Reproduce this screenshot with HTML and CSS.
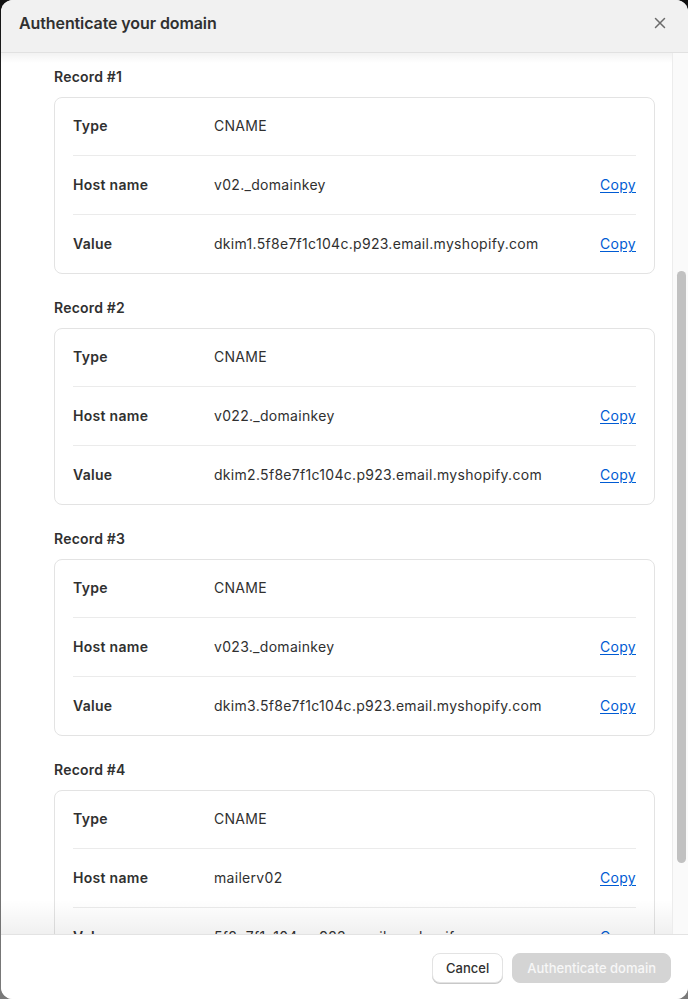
FILE: index.html
```html
<!DOCTYPE html>
<html>
<head>
<meta charset="UTF-8" /><title>Authenticate your domain</title>
<link rel="stylesheet" href="styles.css">
</head>
<body>
<div class="modal">
	<div class="modal-head">
		<h2 class="modal-title">Authenticate your domain</h2>
		<span class="close">
			<svg width="12" height="12" viewBox="0 0 12 12"><path d="M1.5 1.5l9 9M10.5 1.5l-9 9" stroke="#6b6b6b" stroke-width="1.5" stroke-linecap="round" fill="none"/></svg>
		</span>
	</div>

	<div class="modal-body">
		<div class="records">
			<div class="record">
				<h3 class="record-title">Record #1</h3>
				<div class="card">
					<div class="row"><span class="label">Type</span><span class="value">CNAME</span></div>
					<div class="row"><span class="label">Host name</span><span class="value">v02._domainkey</span><a class="copy" href="#">Copy</a></div>
					<div class="row"><span class="label">Value</span><span class="value">dkim1.5f8e7f1c104c.p923.email.myshopify.com</span><a class="copy" href="#">Copy</a></div>
				</div>
			</div>
			<div class="record">
				<h3 class="record-title">Record #2</h3>
				<div class="card">
					<div class="row"><span class="label">Type</span><span class="value">CNAME</span></div>
					<div class="row"><span class="label">Host name</span><span class="value">v022._domainkey</span><a class="copy" href="#">Copy</a></div>
					<div class="row"><span class="label">Value</span><span class="value">dkim2.5f8e7f1c104c.p923.email.myshopify.com</span><a class="copy" href="#">Copy</a></div>
				</div>
			</div>
			<div class="record">
				<h3 class="record-title">Record #3</h3>
				<div class="card">
					<div class="row"><span class="label">Type</span><span class="value">CNAME</span></div>
					<div class="row"><span class="label">Host name</span><span class="value">v023._domainkey</span><a class="copy" href="#">Copy</a></div>
					<div class="row"><span class="label">Value</span><span class="value">dkim3.5f8e7f1c104c.p923.email.myshopify.com</span><a class="copy" href="#">Copy</a></div>
				</div>
			</div>
			<div class="record">
				<h3 class="record-title">Record #4</h3>
				<div class="card">
					<div class="row"><span class="label">Type</span><span class="value">CNAME</span></div>
					<div class="row"><span class="label">Host name</span><span class="value">mailerv02</span><a class="copy" href="#">Copy</a></div>
					<div class="row"><span class="label">Value</span><span class="value">5f8e7f1c104c.p923.email.myshopify.com</span><a class="copy" href="#">Copy</a></div>
				</div>
			</div>
		</div>
		<!-- scroll shadows + scrollbar -->
		<div class="fade-top"></div>
		<div class="fade-bottom"></div>
		<div class="scroll-track"><div class="scroll-thumb"></div></div>
	</div>

	<div class="modal-foot">
		<button class="btn">Cancel</button>
		<button class="btn btn-primary" disabled>Authenticate domain</button>
	</div>
</div>
</body>
</html>
```

FILE: styles.css
```css
* {
	padding: 0px;
	margin: 0px;
	box-sizing: border-box;
}
html {
	height: 100%;
	background: #6e6e6e;
}
body {
	height: 100%;
	overflow: hidden;
	font: 14px "Inter", "Noto Sans", sans-serif;
	color: #303030;
	background: linear-gradient(#111, #3c3c3c 20%, #7a7a7a);
	padding-left: 1px;
}

.modal {
	height: 100%;
	background: #fff;
	border-radius: 12px;
	display: flex;
	flex-direction: column;
	overflow: hidden;
}

/* header */
.modal-head {
	height: 53px;
	flex: none;
	display: flex;
	align-items: flex-start;
	justify-content: space-between;
	padding: 13px 22px 0 18px;
	background: #f1f1f1;
	border-bottom: 1px solid #e1e1e1;
}
.modal-title {
	font-size: 16px;
	font-weight: 600;
	line-height: 20px;
	letter-spacing: -0.1px;
}
.close {
	display: flex;
	padding-top: 4px;
}

/* body */
.modal-body {
	flex: 1;
	position: relative;
	overflow: hidden;
	padding: 14px 33px 0 53px;
}
.records {
	display: flex;
	flex-direction: column;
	gap: 24px;
}
.record-title {
	font-size: 14px;
	font-weight: 600;
	line-height: 20px;
	letter-spacing: 0.2px;
	margin-bottom: 10px;
}
.card {
	border: 1px solid #e3e3e3;
	border-radius: 8px;
	padding: 0 18px;
}
.row {
	display: flex;
	align-items: center;
	padding: 18px 0;
	line-height: 22px;
	letter-spacing: 0.3px;
	border-bottom: 1px solid #ebebeb;
}
.row:first-child {
	padding-top: 17px;
}
.row:last-child {
	border-bottom: none;
}
.label {
	width: 141px;
	flex: none;
	font-weight: 600;
}
.value {
	flex: 1;
}
.copy {
	color: #005bd3;
	text-decoration: underline;
	text-underline-offset: 2px;
}

.fade-top {
	position: absolute;
	left: 0;
	right: 0;
	top: 0;
	height: 10px;
	background: linear-gradient(rgba(0,0,0,0.05), rgba(0,0,0,0));
}
.fade-bottom {
	position: absolute;
	left: 0;
	right: 0;
	bottom: 0;
	height: 34px;
	background: linear-gradient(rgba(0,0,0,0), rgba(0,0,0,0.06));
}
.scroll-track {
	position: absolute;
	top: 0;
	bottom: 0;
	right: 0;
	width: 16px;
	background: #fafafa;
	border-left: 1px solid #ececec;
}
.scroll-thumb {
	position: absolute;
	left: 4px;
	width: 9px;
	top: 218px;
	height: 592px;
	border-radius: 5px;
	background: #c1c1c1;
}

/* footer */
.modal-foot {
	flex: none;
	height: 65px;
	display: flex;
	justify-content: flex-end;
	gap: 9px;
	padding: 18px 17px 0 0;
	border-top: 1px solid #e3e3e3;
	background: #fff;
}
.btn {
	height: 30px;
	padding: 0 13px;
	font: 550 13px "Inter", "Noto Sans", sans-serif;
	color: #303030;
	background: #fff;
	border: 1px solid #e3e3e3;
	border-radius: 8px;
	box-shadow: 0 1px 0 #c8c8c8;
}
.btn-primary {
	padding: 0 14px;
	color: #f7f7f7;
	background: #d4d4d4;
	border-color: #d4d4d4;
	box-shadow: none;
}
```
